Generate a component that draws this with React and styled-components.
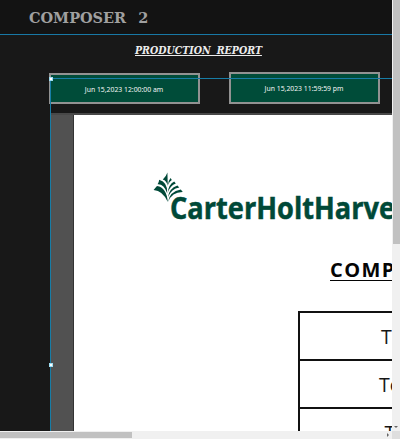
import React from "react";
import styled, { createGlobalStyle } from "styled-components";

const GlobalStyle = createGlobalStyle`
  * { box-sizing: border-box; }
  body { margin: 0; overflow: hidden; background: #efefef; font-family: "Open Sans", "Noto Sans", sans-serif; }
`;

const Window = styled.div`
  display: grid;
  grid-template: 431px 8px / 392px 8px;
  width: 400px;
  height: 439px;
  overflow: hidden;
`;

const Canvas = styled.main`
  position: relative;
  display: flex;
  flex-direction: column;
  min-width: 0;
  overflow: hidden;
  background: #181818;
`;

const Header = styled.header`
  flex: none;
  height: 35px;
  padding: 8px 0 0 28.5px;
  background: #131313;
  border-bottom: 1px solid #1878a5;
`;

const Title = styled.h1`
  width: max-content;
  margin: 0;
  font: bold 15.4px/20px "DejaVu Serif", serif;
  word-spacing: 7.5px;
  color: #a0a0a0;
  white-space: nowrap;
  transform: scaleX(0.94);
  transform-origin: left;
`;

const Subtitle = styled.h2`
  flex: none;
  width: max-content;
  height: 38px;
  margin: 0 0 0 134.5px;
  padding: 8px 0 0;
  font: italic bold 10.3px/14px "DejaVu Serif", serif;
  word-spacing: 3px;
  color: #ececec;
  text-decoration: underline;
  text-decoration-thickness: 1px;
  text-underline-offset: 1px;
  white-space: nowrap;
  transform: scaleX(0.92);
  transform-origin: left;
`;

const DateRow = styled.div`
  flex: none;
  display: flex;
  gap: 29px;
  height: 40px;
  padding-left: 49px;
`;

const DateBox = styled.button`
  width: 151px;
  height: ${({ $lifted }) => ($lifted ? 32 : 31)}px;
  margin: ${({ $lifted }) => ($lifted ? "-1px" : "0")} 0 0;
  padding: ${({ $lifted }) => ($lifted ? 0 : 1)}px 1px 0 0;
  border: 2px solid #929292;
  background: #004c39;
  color: #f4f7f5;
  font: 6.85px/27px "Noto Sans", sans-serif;
  text-align: center;
  white-space: nowrap;
`;

const Viewer = styled.section`
  flex: 1;
  display: flex;
  min-height: 0;
  margin-left: 51px;
  padding: 0 0 0 22px;
  border-top: 2px solid #484848;
  background: #515151;
`;

const Paper = styled.article`
  flex: 1;
  min-width: 0;
  overflow: hidden;
  border-left: 1px solid #333;
  background: #fff;
`;

const Logo = styled.svg`
  display: block;
  width: 260px;
  height: 65px;
  margin: 50px 0 0 76px;
  fill: #004938;
`;

const LogoText = styled.text`
  font: bold 31px "Open Sans", sans-serif;
  stroke: #004938;
  stroke-width: 0.5px;
`;

const ReportHeading = styled.h3`
  width: 240px;
  margin: 26px 0 0 256px;
  color: #050505;
  font: bold 20px/27px "Open Sans", sans-serif;
  letter-spacing: 1.4px;
  text-decoration: underline;
  text-decoration-thickness: 1px;
  text-underline-offset: 3px;
  white-space: nowrap;
`;

const ReportTable = styled.div`
  width: 240px;
  margin: 28px 0 0 224px;
  border: 2px solid #111;
  border-bottom: 0;
`;

const TableRow = styled.div`
  height: 48px;
  padding-left: ${({ $indent }) => $indent}px;
  border-bottom: 2px solid #111;
  color: #151515;
  font: 19.5px/48px "Open Sans", sans-serif;
  white-space: nowrap;
`;

const Selection = styled.div`
  position: absolute;
  left: 50px;
  top: 78px;
  width: 400px;
  height: 572px;
  border: 1px solid #177da6;
  pointer-events: none;
`;

const Handle = styled.i`
  position: absolute;
  left: -2px;
  top: ${({ $y }) => $y}px;
  width: 4px;
  height: 4px;
  border: 1px solid #9fdcf0;
  background: #fff;
`;

const VerticalTrack = styled.div`
  display: flex;
  flex-direction: column;
  justify-content: space-between;
  align-items: center;
  background: #f0f0f0;
`;

const VerticalThumb = styled.div`
  width: 8px;
  height: 244px;
  border-left: 1px solid #f0f0f0;
  background: #c1c1c1;
`;

const HorizontalTrack = styled.div`
  display: flex;
  justify-content: space-between;
  align-items: center;
  background: #f0f0f0;
`;

const HorizontalThumb = styled.div`
  width: 132px;
  height: 6px;
  background: #c1c1c1;
`;

const Arrow = styled.svg`
  display: block;
  width: 8px;
  height: 8px;
  fill: #666;
`;

const Corner = styled.div`
  background: #dedede;
`;

const rows = [
  { label: "Time", indent: 81 },
  { label: "Total", indent: 79 },
  { label: "Total", indent: 84.5 },
];

function CompanyLogo() {
  return (
    <Logo viewBox="150 165 260 65" role="img" aria-label="Carter Holt Harvey">
      <path d="M167.4 172.6Q166 177 162.8 179.6Q166.6 180.8 167.8 186Z" />
      <path d="M159.2 179.8Q158.8 183 157.6 184.2Q164 183.8 167.3 193.4Q167.8 182.2 159.2 179.8Z" />
      <path d="M153.6 190Q155.6 187.6 157 186Q166.6 187.6 167.8 202Q162.8 190.6 153.6 190Z" />
      <path d="M168 185Q168.4 180.2 170.6 178L171.8 180Q169.2 181.6 168 185Z" />
      <path d="M168 192Q168.4 184.6 174.2 181.4L175.8 183.4Q170.2 185.6 168 192Z" />
      <path d="M168 197Q169 188.4 177.4 185.4L179.3 187.6Q171.4 189 168 197Z" />
      <path d="M168 202Q169.4 191.4 180.8 189.4L182.8 192Q172 191.8 168 202Z" />
      <LogoText x="170" y="219" textLength="240.5" lengthAdjust="spacingAndGlyphs">CarterHoltHarvey</LogoText>
    </Logo>
  );
}

export default function App() {
  return (
    <>
      <GlobalStyle />
      <Window>
        <Canvas>
          <Header><Title>COMPOSER 2</Title></Header>
          <Subtitle>PRODUCTION REPORT</Subtitle>
          <DateRow>
            <DateBox>Jun 15,2023 12:00:00 am</DateBox>
            <DateBox $lifted>Jun 15,2023 11:59:59 pm</DateBox>
          </DateRow>
          <Viewer>
            <Paper>
              <CompanyLogo />
              <ReportHeading>COMPOSER</ReportHeading>
              <ReportTable>
                {rows.map(({ label, indent }, i) => (
                  <TableRow key={i} $indent={indent}>{label}</TableRow>
                ))}
              </ReportTable>
            </Paper>
          </Viewer>
          <Selection><Handle $y={-2} /><Handle $y={284} /></Selection>
        </Canvas>
        <VerticalTrack>
          <VerticalThumb />
          <Arrow viewBox="0 0 8 8"><path d="M2 3h4L4 5Z" /></Arrow>
        </VerticalTrack>
        <HorizontalTrack>
          <HorizontalThumb />
          <Arrow viewBox="0 0 8 8"><path d="M3 2v4l2-2Z" /></Arrow>
        </HorizontalTrack>
        <Corner />
      </Window>
    </>
  );
}
